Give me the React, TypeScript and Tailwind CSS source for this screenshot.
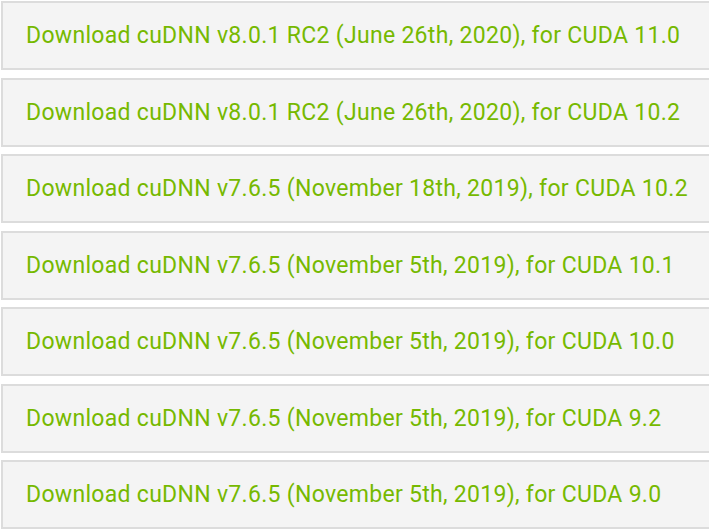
import React from "react";

const items = [
  "Download cuDNN v8.0.1 RC2 (June 26th, 2020), for CUDA 11.0",
  "Download cuDNN v8.0.1 RC2 (June 26th, 2020), for CUDA 10.2",
  "Download cuDNN v7.6.5 (November 18th, 2019), for CUDA 10.2",
  "Download cuDNN v7.6.5 (November 5th, 2019), for CUDA 10.1",
  "Download cuDNN v7.6.5 (November 5th, 2019), for CUDA 10.0",
  "Download cuDNN v7.6.5 (November 5th, 2019), for CUDA 9.2",
  "Download cuDNN v7.6.5 (November 5th, 2019), for CUDA 9.0",
];

export default function App() {
  return (
    <div className="w-[709px] h-[531px] overflow-hidden bg-white pt-[1px] pl-[1px]">
      <div className="flex flex-col gap-[7.5px] w-[740px]">
        {items.map((t) => (
          <div
            key={t}
            className="h-[69px] border-2 border-[#dcdcdc] bg-[#f4f4f4] flex items-center pl-[23px]"
          >
            <span
              className="text-[#76b900] text-[23px] leading-none whitespace-nowrap tracking-[0.3px]"
              style={{ fontFamily: "Roboto, sans-serif" }}
            >
              {t}
            </span>
          </div>
        ))}
      </div>
    </div>
  );
}
